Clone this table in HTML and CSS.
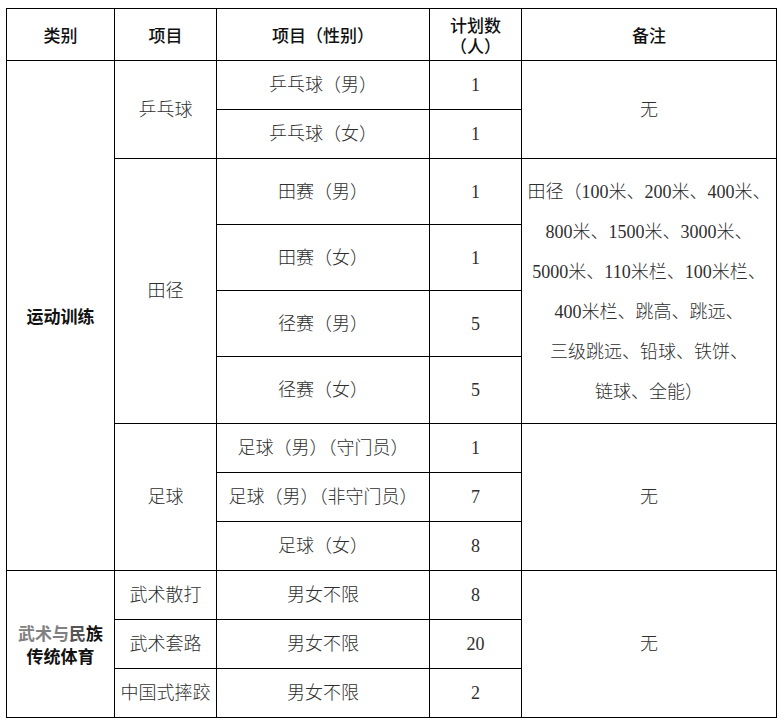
FILE: index.html
```html
<!DOCTYPE html>
<html lang="zh-CN">
<head>
<meta charset="utf-8">
<title>招生计划</title>
<link rel="stylesheet" href="styles.css">
</head>
<body>
<div class="table">
  <div class="cell head"><span class="txt">类别</span></div>
  <div class="cell head"><span class="txt">项目</span></div>
  <div class="cell head"><span class="txt">项目（性别）</span></div>
  <div class="cell head"><span class="txt">计划数<br>（人）</span></div>
  <div class="cell head"><span class="txt">备注</span></div>

  <div class="cell cat span9"><span class="txt">运动训练</span></div>
  <div class="cell span2"><span class="txt">乒乓球</span></div>
  <div class="cell"><span class="txt">乒乓球（男）</span></div>
  <div class="cell num"><span class="txt">1</span></div>
  <div class="cell span2"><span class="txt">无</span></div>

  <div class="cell"><span class="txt">乒乓球（女）</span></div>
  <div class="cell num"><span class="txt">1</span></div>

  <div class="cell span4"><span class="txt">田径</span></div>
  <div class="cell"><span class="txt">田赛（男）</span></div>
  <div class="cell num"><span class="txt">1</span></div>
  <div class="cell span4 notes"><span class="txt">田径（100米、200米、400米、<br>800米、1500米、3000米、<br>5000米、110米栏、100米栏、<br>400米栏、跳高、跳远、<br>三级跳远、铅球、铁饼、<br>链球、全能）</span></div>

  <div class="cell"><span class="txt">田赛（女）</span></div>
  <div class="cell num"><span class="txt">1</span></div>

  <div class="cell"><span class="txt">径赛（男）</span></div>
  <div class="cell num"><span class="txt">5</span></div>

  <div class="cell"><span class="txt">径赛（女）</span></div>
  <div class="cell num"><span class="txt">5</span></div>

  <div class="cell span3"><span class="txt">足球</span></div>
  <div class="cell"><span class="txt">足球（男）（守门员）</span></div>
  <div class="cell num"><span class="txt">1</span></div>
  <div class="cell span3"><span class="txt">无</span></div>

  <div class="cell"><span class="txt">足球（男）（非守门员）</span></div>
  <div class="cell num"><span class="txt">7</span></div>

  <div class="cell"><span class="txt">足球（女）</span></div>
  <div class="cell num"><span class="txt">8</span></div>

  <div class="cell cat span3"><span class="txt"><span class="fade1">武术与</span><span class="fade2">民</span>族<br>传统体育</span></div>
  <div class="cell"><span class="txt">武术散打</span></div>
  <div class="cell"><span class="txt">男女不限</span></div>
  <div class="cell num"><span class="txt">8</span></div>
  <div class="cell span3"><span class="txt">无</span></div>

  <div class="cell"><span class="txt">武术套路</span></div>
  <div class="cell"><span class="txt">男女不限</span></div>
  <div class="cell num"><span class="txt">20</span></div>

  <div class="cell"><span class="txt">中国式摔跤</span></div>
  <div class="cell"><span class="txt">男女不限</span></div>
  <div class="cell num"><span class="txt">2</span></div>
</div>
</body>
</html>
```

FILE: styles.css
```css
html, body {
  margin: 0;
  background: #ffffff;
}

body {
  padding: 8px 0 0 6px;
  font-family: "Liberation Serif", "Noto Sans CJK SC", serif;
}

.table {
  display: grid;
  width: max-content;
  background: #000000;
  padding: 1px;
  gap: 1px;
  grid-template-columns: 107px 101px 212px 91px 254px;
  grid-template-rows: 51px 48px 48px 65px 65px 65px 66px 48px 48px 48px 48px 48px 48px;
}

.cell {
  background: #ffffff;
  display: flex;
  align-items: center;
  justify-content: center;
  text-align: center;
  font-size: 18px;
  line-height: 22px;
  color: #2e2e2e;
  font-weight: 300;
  white-space: nowrap;
}

.txt {
  display: block;
}

.head {
  font-family: "Noto Sans CJK SC", sans-serif;
  font-weight: 500;
  color: #111111;
  font-size: 17px;
  line-height: 21px;
}

.cat {
  font-family: "Noto Sans CJK SC", sans-serif;
  font-weight: 700;
  color: #111111;
  font-size: 17px;
  line-height: 23px;
}

.fade1 {
  color: #808080;
}

.fade2 {
  color: #555555;
}

.num {
  font-weight: 400;
}

.notes {
  line-height: 40px;
  padding-top: 2px;
}

.span2 { grid-row: span 2; }
.span3 { grid-row: span 3; }
.span4 { grid-row: span 4; }
.span9 { grid-row: span 9; }
```
